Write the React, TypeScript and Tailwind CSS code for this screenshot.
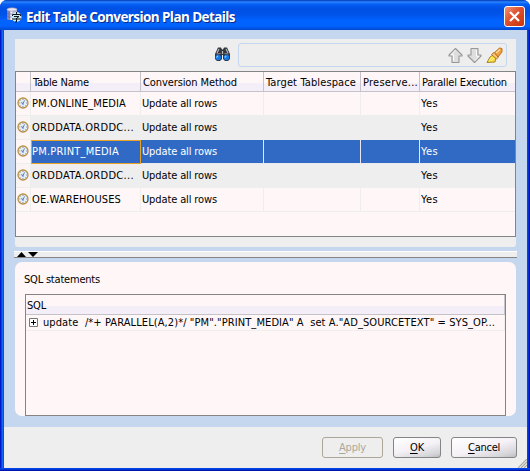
import { useLayoutEffect, useRef, useState } from "react";
import type { ReactNode } from "react";

/** One line of text whose letter spacing is tuned so it fills `width` pixels. */
function Label({ width, children, className = "" }: { width: number; children: ReactNode; className?: string }) {
  const ref = useRef<HTMLSpanElement>(null);
  const [spacing, setSpacing] = useState(0);
  useLayoutEffect(() => {
    const el = ref.current;
    if (!el) return;
    const count = (el.textContent ?? "").length;
    setSpacing((width - el.getBoundingClientRect().width) / count);
  }, [width]);
  return (
    <span ref={ref} className={`inline-block shrink-0 whitespace-pre ${className}`} style={{ letterSpacing: spacing }}>
      {children}
    </span>
  );
}

function AppIcon() {
  return (
    <svg width="16" height="16" viewBox="0 0 16 16">
      <path d="M1 2.5v9c0 2 10 2 10 0v-9z" fill="#b9b4cf" />
      <path d="M1 2.5v9c0 1 2 1.500 3 1.500V3z" fill="#8380b4" />
      <path d="M4.500 3v10h2V3z" fill="#f3f1f8" />
      <ellipse cx="6" cy="2.500" rx="5" ry="1.800" fill="#e7e3ef" stroke="#8f8bb5" strokeWidth=".6" />
      <path d="M1 6c1 1.500 9 1.500 10 0M1 9c1 1.500 9 1.500 10 0" fill="none" stroke="#706ca3" strokeWidth=".7" />
      <circle cx="10.500" cy="10" r="5" fill="#c4e8f4" />
      <path d="M10.500 5v2M6.500 9V7.500h8V9M8 9.500h5l-2 1.500M6 12h9M10.500 11v4H9" fill="none" stroke="#10141c" />
    </svg>
  );
}

function Binoculars() {
  return (
    <svg width="17" height="15" viewBox="0 0 17 15">
      <path d="M4 .5h3l1 2h1l1-2h3l3 6.500v5L14 14h-3l-2-2V8H8v4l-2 2H3l-2-2V7z" fill="#33363c" />
      <path d="M5 2L3 6M12 2l2 4M8.500 4v3" stroke="#b5b8bd" strokeWidth="1.200" />
      <path d="M2.500 7l4-.5M10.500 6.500l4 .5" stroke="#8b8e95" />
      <circle cx="4.300" cy="10.500" r="2.700" fill="#1479e8" />
      <circle cx="12.500" cy="10.500" r="2.700" fill="#1479e8" />
      <path d="M2.500 10.500l1.500-1.500M10.700 10.500l1.500-1.500" stroke="#8ccaff" strokeWidth="1.100" />
    </svg>
  );
}

function Arrow({ down = false }: { down?: boolean }) {
  return (
    <svg width="15" height="17" viewBox="0 0 15 17" className={down ? "rotate-180" : ""}>
      <path d="M7.500 1.500L14 8v1h-3v6.500H4V9H1V8z" fill="#dedede" stroke="#989898" strokeWidth="1.100" strokeLinejoin="round" />
      <path d="M7.500 3L3 7.700h2.500V14" fill="none" stroke="#fafafa" />
    </svg>
  );
}

function Brush() {
  return (
    <svg width="17" height="17" viewBox="0 0 17 17">
      <path d="M1 15.500l3-5.500 3-2 3 3-1 4z" fill="#f5dc3c" stroke="#a07a1c" strokeWidth=".9" />
      <path d="M3 14l3-4M5 14l3-3" stroke="#fff6a0" />
      <path d="M5.500 7.500L8 5.500l4.500 4.500-2 2z" fill="#f6c780" stroke="#b56a1a" strokeWidth=".9" />
      <path d="M8.500 5.500l5-4.500L16 1.500V5l-4 5z" fill="#f2a13c" stroke="#b9691a" strokeWidth=".9" />
      <path d="M10 6l4-3.500" stroke="#ffe0ad" strokeWidth="1.200" />
    </svg>
  );
}

function Clock() {
  return (
    <svg width="12" height="12" viewBox="0 0 12 12" className="ml-px shrink-0">
      <circle cx="6" cy="6" r="5" fill="#e4ecf7" stroke="#b6913f" strokeWidth="1.300" />
      <path d="M6 6.500L7.500 3.500M6 6.500L4 5.500M6 6v2" stroke="#5a70aa" strokeWidth=".9" fill="none" />
      <path d="M6 2v1M2.300 6h.8M9 6h.8M6 9v1M3.500 8.500l.5-.5M8 8l.5.5M3.500 3.500l.5.5" stroke="#8292b4" />
    </svg>
  );
}

const columns = "grid grid-cols-[15px_110px_123px_97px_59px_1fr]";

const headers = [
  { text: "Table Name", width: 56 },
  { text: "Conversion Method", width: 94 },
  { text: "Target Tablespace", width: 90 },
  { text: "Preserve...", width: 55 },
  { text: "Parallel Execution", width: 85 },
];

const rows = [
  { name: "PM.ONLINE_MEDIA", width: 94, tone: "bg-[#fff7f7]" },
  { name: "ORDDATA.ORDDC...", width: 102, tone: "bg-[#eeeeee]" },
  { name: "PM.PRINT_MEDIA", width: 87, tone: "bg-[#316ac5]", selected: true },
  { name: "ORDDATA.ORDDC...", width: 102, tone: "bg-[#eeeeee]" },
  { name: "OE.WAREHOUSES", width: 89, tone: "bg-[#fff7f7]" },
];

const headerTone = "bg-[linear-gradient(#fff7f7_0_11px,#f4eef8_11px)]";

function PlanTable() {
  return (
    <div className="h-[166px] border border-[#848484] bg-[#fff7f7]">
      <div className={`${columns} ${headerTone} h-5 border-b border-[#c5c2c8]`}>
        <div className="border-r border-[#c5c2c8]" />
        {headers.map((h, i) => (
          <div key={h.text} className={`flex items-center overflow-hidden pt-[2px] pl-[2px] ${i < 4 ? "border-r border-[#c5c2c8]" : ""}`}>
            <Label width={h.width}>{h.text}</Label>
          </div>
        ))}
      </div>
      {rows.map((r, i) => {
        const cell = `flex items-center border-b pt-px ${r.selected ? "border-[#e8e8ee] text-white" : "border-[#eeeeee]"} ${r.tone}`;
        const line = r.selected ? "border-r border-r-[#e8e8f4]" : "border-r border-r-[#eeeeee]";
        return (
          <div key={i} className={`${columns} h-6`}>
            <div className={`flex items-center border-r border-b border-[#eeeeee] pb-px ${i % 2 ? "bg-[#fbf4f4]" : "bg-[#fff7f7]"}`}>
              <Clock />
            </div>
            {r.selected ? (
              <div className="flex items-center border border-[#e9a227] bg-[#316ac5] text-white">
                <Label width={r.width}>{r.name}</Label>
              </div>
            ) : (
              <div className={`${cell} ${line} pl-px`}>
                <Label width={r.width}>{r.name}</Label>
              </div>
            )}
            <div className={`${cell} ${line} pl-px`}>
              <Label width={75}>Update all rows</Label>
            </div>
            <div className={`${cell} ${line}`} />
            <div className={`${cell} ${line}`} />
            <div className={`${cell} pl-px`}>
              <Label width={17}>Yes</Label>
            </div>
          </div>
        );
      })}
    </div>
  );
}

function Button({ mnemonic, rest, textWidth, className }: { mnemonic: string; rest: string; textWidth: number; className: string }) {
  return (
    <button className={`flex h-[21px] items-center justify-center rounded-[3px] border pt-px ${className}`}>
      <Label width={textWidth}>
        <span className="underline underline-offset-2">{mnemonic}</span>
        {rest}
      </Label>
    </button>
  );
}

const raised = "border-[#858585] bg-[linear-gradient(165deg,#ffffff_0%,#f5f1f7_50%,#d5d5d9_85%,#bcbcc0_100%)]";

export default function App() {
  return (
    <div className="flex h-[471px] w-[530px] flex-col overflow-hidden rounded-t-[7px] bg-[linear-gradient(90deg,#0019c8_0_1px,#0046e4_1px_2px,#1668f2_2px_3px,#0050e8_3px_4px,#0046e4_4px_528px,#0030d8_528px_529px,#0014a8_529px)] font-['DejaVu_Sans_Condensed','DejaVu_Sans',sans-serif] text-[11px] leading-[14px] text-black [font-stretch:condensed]">
      <header className="flex h-[30px] shrink-0 items-center bg-[linear-gradient(#0036b8_0,#2b86ff_2px,#0661f5_4px,#0050e4_8px,#0054ea_15px,#0062ff_20px,#0062ff_26px,#0048d0_30px)] pl-[6px]">
        <AppIcon />
        <Label
          width={209}
          className="mt-[3px] ml-1 font-['Open_Sans','Noto_Sans',sans-serif] text-[13.5px] leading-5 font-bold text-white [font-stretch:normal] [text-shadow:1px_1px_#0a2a8c]"
        >
          Edit Table Conversion Plan Details
        </Label>
        <button className="mt-[3px] mr-[5px] ml-auto flex size-[21px] items-center justify-center rounded-[3px] border border-white bg-[linear-gradient(135deg,#f0937a,#e0502c_45%,#c8330c)]">
          <svg width="13" height="13" viewBox="0 0 13 13">
            <path d="M2 2l9 9M11 2l-9 9" stroke="#fff" strokeWidth="2.200" />
          </svg>
        </button>
      </header>

      <main className="mr-[3px] ml-1 flex h-[397px] shrink-0 flex-col bg-[#c5d6ef] pt-[9px] pr-[11px] pl-[11px]">
        <section className="h-[208px] rounded-b-[3px] bg-[#eeeeee]">
          <div className="flex h-8 items-start pt-1">
            <div className="mt-1 ml-[199px]">
              <Binoculars />
            </div>
            <div className="ml-[7px] flex h-6 w-[269px] items-center justify-end gap-[4px] rounded-[3px] border border-[#c5d6ef] pr-[3px]">
              <Arrow />
              <Arrow down />
              <Brush />
            </div>
          </div>
          <PlanTable />
        </section>

        <div className="-mx-px mt-1 flex h-[7px] shrink-0 items-center border-t border-b border-t-white border-b-[#848484] bg-[#eeeeee] pl-[3px]">
          <svg width="21" height="5" viewBox="0 0 21 5">
            <path d="M0 5L4.500 0L9 5zM11 0h10l-5 5z" fill="#000" />
          </svg>
        </div>

        <section className="mt-1 h-[154px] shrink-0 rounded-[7px] bg-[#fff7f7] px-[10px] pt-[11px]">
          <Label width={76} className="-ml-px">SQL statements</Label>
          <div className="mt-[7px] h-[122px] border border-[#848484]">
            <div className={`${headerTone} flex h-5 items-center border-r border-b border-[#c5c2c8] pt-[2px] pl-px`}>
              <Label width={19}>SQL</Label>
            </div>
            <div className="flex h-4 items-center border-r border-b border-[#eeeeee] pl-[3px]">
              <svg width="9" height="9" viewBox="0 0 9 9">
                <path d="M.5.5h8v8h-8z" fill="#fff" stroke="#777" />
                <path d="M2 4.500h5M4.500 2v5" stroke="#000" />
              </svg>
              <Label width={452} className="ml-[5px]">
                {'update  /*+ PARALLEL(A,2)*/ "PM"."PRINT_MEDIA" A  set A."AD_SOURCETEXT" = SYS_OP...'}
              </Label>
            </div>
          </div>
        </section>
      </main>

      <footer className="relative mr-[3px] ml-1 flex h-[41px] shrink-0 items-start justify-end gap-[10px] bg-[#eeeeee] pt-[10px] pr-[10px]">
        <Button mnemonic="A" rest="pply" textWidth={27} className="w-[61px] border-[#aca899] bg-[#eeeeee] text-[#aca899]" />
        <Button mnemonic="O" rest="K" textWidth={14} className={`w-12 ${raised}`} />
        <Button mnemonic="C" rest="ancel" textWidth={32} className={`w-[66px] ${raised}`} />
        <svg width="9" height="9" viewBox="0 0 9 9" className="absolute right-0 bottom-0">
          <path d="M0 9L9 0M3 9l6-6M6 9l3-3" stroke="#aaa9a0" strokeWidth="1.200" />
        </svg>
      </footer>
      <div className="h-[3px] shrink-0 bg-[linear-gradient(#0046e4_0_1px,#0034d8_1px_2px,#0014a8_2px)]" />
    </div>
  );
}
